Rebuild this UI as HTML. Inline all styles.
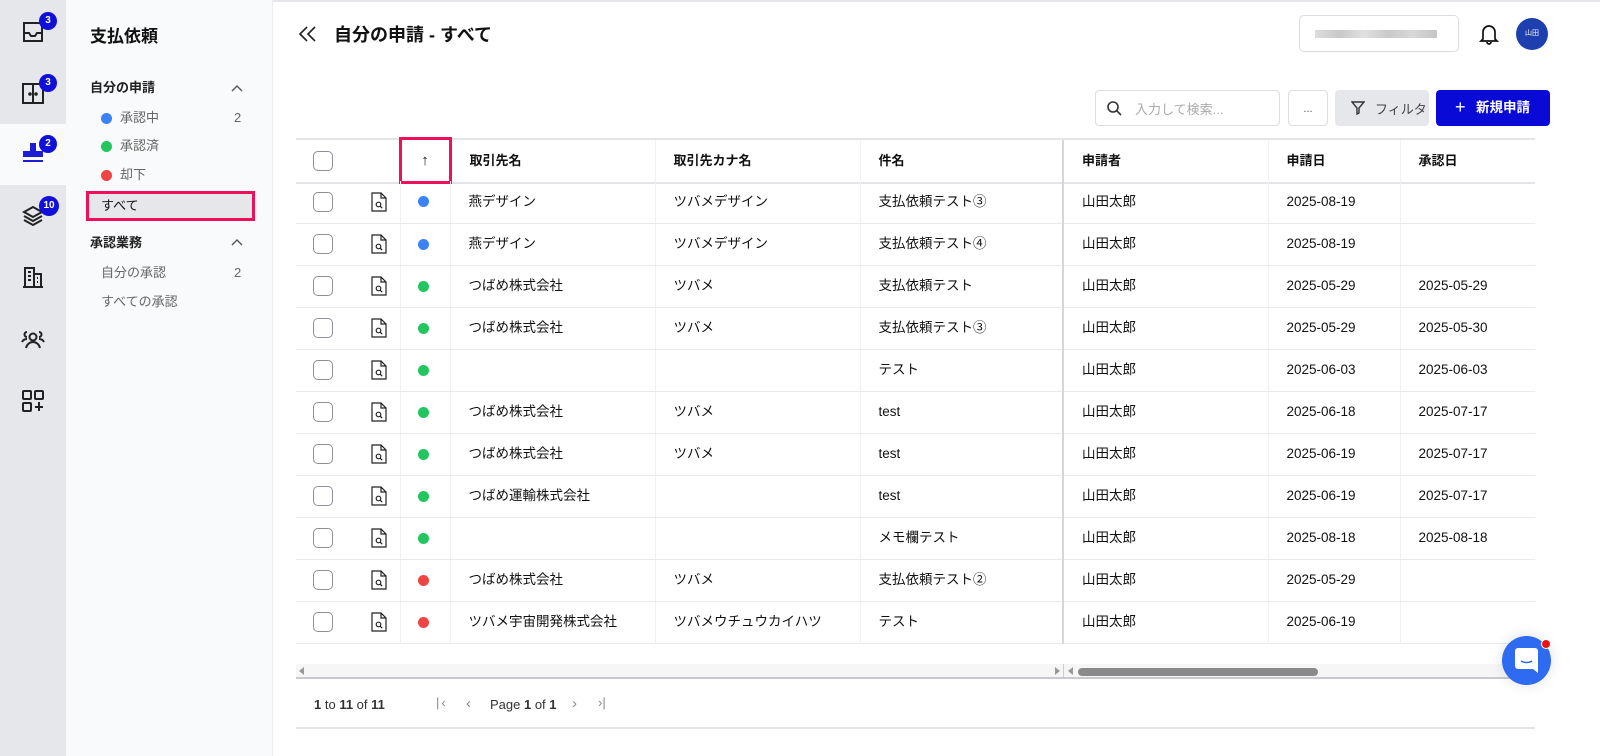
<!DOCTYPE html>
<html><head><meta charset="utf-8">
<style>
*{box-sizing:border-box;margin:0;padding:0}
body{width:1600px;height:756px;overflow:hidden;background:#fff;font-family:"Liberation Sans","Noto Sans CJK JP",sans-serif;color:#111;position:relative}
.abs{position:absolute}
.rail{left:0;top:0;width:66px;height:756px;background:#e5e7eb}
.rail .act{position:absolute;left:0;top:124px;width:66px;height:61px;background:#f9fafb}
.ic{position:absolute;left:20px;width:26px;height:26px}
.badge{position:absolute;background:#1010d8;color:#fff;font-size:10px;font-weight:bold;border-radius:50%;width:18px;height:18px;line-height:18px;text-align:center}
.side{left:66px;top:0;width:207px;height:756px;background:#f9fafb;border-right:1px solid #eceef1}
.side .t{position:absolute;left:24px;top:22px;font-size:17px;font-weight:bold}
.side .sec{position:absolute;left:24px;font-size:13px;font-weight:bold;color:#222;line-height:18px}
.side .it{position:absolute;left:35px;font-size:13px;color:#666;line-height:18px}
.side .cnt{position:absolute;left:168px;font-size:13px;color:#666;line-height:18px}
.dot{display:inline-block;width:11px;height:11px;border-radius:50%;position:absolute}
.chev{position:absolute;left:165px;width:12px;height:8px}
table{border-collapse:collapse;position:absolute;left:296px;top:137px;width:1239px;font-size:13.5px;table-layout:fixed}
td,th{height:42px;line-height:20px;vertical-align:middle;border-bottom:1px solid #e8e9ec;border-left:1px solid #f0f1f3;padding-left:18px;text-align:left;white-space:nowrap;overflow:hidden}
th{height:44px;font-weight:bold;font-size:13px;border-top:2px solid #e3e4e7;border-bottom:2px solid #e3e4e7}
td:first-child,th:first-child,td:nth-child(2),th:nth-child(2){border-left:none}
.pin{border-left:2px solid #d5d7dc!important}
.cb{display:block;width:20px;height:20px;border:1.5px solid #8d9097;border-radius:5px;margin-left:-1px}
.sd{display:block;width:11px;height:11px;border-radius:50%;margin-left:-1px}
.b{background:#3b82f6}.g{background:#22c55e}.r{background:#ef4444}
</style></head><body>
<div class="abs rail">
 <div class="act"></div>
 <svg class="ic" style="top:19px" viewBox="0 0 26 26" fill="none" stroke="#222" stroke-width="2"><path d="M4 4h18v18H4z M4 14h5l2 3h4l2-3h5"/></svg>
 <div class="badge" style="left:39px;top:12px">3</div>
 <svg class="ic" style="top:80px" viewBox="0 0 26 26" fill="none" stroke="#222" stroke-width="2"><path d="M3 4h20v19H3z M13 4v19"/><circle cx="10" cy="14" r=".8" fill="#222"/><circle cx="16" cy="14" r=".8" fill="#222"/></svg>
 <div class="badge" style="left:39px;top:74px">3</div>
 <svg class="ic" style="top:140px" viewBox="0 0 26 26" fill="#1d1dd6"><path d="M10 3h6v8h7v6H3v-6h7z"/><rect x="3" y="20" width="20" height="2"/></svg>
 <div class="badge" style="left:39px;top:135px">2</div>
 <svg class="ic" style="top:203px" viewBox="0 0 26 26" fill="none" stroke="#222" stroke-width="2"><path d="M13 4l9 5-9 5-9-5z M4 13l9 5 9-5 M4 17l9 5 9-5"/></svg>
 <div class="badge" style="left:39px;top:196px;width:20px;height:20px;line-height:20px">10</div>
 <svg class="ic" style="top:264px" viewBox="0 0 26 26" fill="none" stroke="#222" stroke-width="2"><path d="M3 23h20 M5 23V4h9v19 M14 10h7v13 M8 8h3 M8 12h3 M8 16h3 M17 14h1 M17 18h1"/></svg>
 <svg class="ic" style="top:326px" viewBox="0 0 26 26" fill="none" stroke="#222" stroke-width="2"><circle cx="13" cy="11" r="3.5"/><path d="M6 22c1-4 4-6 7-6s6 2 7 6 M7 6a2.5 2.5 0 1 0 0 5 M2 16c1-2 3-3 5-3 M19 6a2.5 2.5 0 1 1 0 5 M24 16c-1-2-3-3-5-3"/></svg>
 <svg class="ic" style="top:388px" viewBox="0 0 26 26" fill="none" stroke="#222" stroke-width="2"><rect x="3" y="3" width="8" height="8" rx="1"/><rect x="15" y="3" width="8" height="8" rx="1"/><rect x="3" y="15" width="8" height="8" rx="1"/><path d="M19 14v9 M15 19h8"/></svg>
</div>
<div class="abs side">
 <div class="t">支払依頼</div>
 <div class="sec" style="top:79px">自分の申請</div>
 <svg class="chev" style="top:84px" viewBox="0 0 12 8" fill="none" stroke="#555" stroke-width="1.4"><path d="M1 7l5-5 5 5"/></svg>
 <span class="dot b" style="left:35px;top:113px"></span><div class="it" style="top:109px;left:54px">承認中</div><div class="cnt" style="top:109px">2</div>
 <span class="dot g" style="left:35px;top:141px"></span><div class="it" style="top:137px;left:54px">承認済</div>
 <span class="dot r" style="left:35px;top:170px"></span><div class="it" style="top:166px;left:54px">却下</div>
 <div style="position:absolute;left:20px;top:191px;width:169px;height:30px;background:#e5e7eb;border:3px solid #f0105a"></div>
 <div class="it" style="top:197px;left:35px;color:#111">すべて</div>
 <div class="sec" style="top:234px">承認業務</div>
 <svg class="chev" style="top:238px" viewBox="0 0 12 8" fill="none" stroke="#555" stroke-width="1.4"><path d="M1 7l5-5 5 5"/></svg>
 <div class="it" style="top:264px">自分の承認</div><div class="cnt" style="top:264px">2</div>
 <div class="it" style="top:293px">すべての承認</div>
</div>
<div class="abs" style="left:273px;top:0;width:1327px;height:2px;background:#e5e7eb"></div>
<svg class="abs" style="left:298px;top:26px" width="20" height="16" viewBox="0 0 20 16" fill="none" stroke="#222" stroke-width="1.6"><path d="M9 1L2 8l7 7 M17 1l-7 7 7 7"/></svg>
<div class="abs" style="left:334px;top:21px;font-size:18px;font-weight:bold">自分の申請 - すべて</div>
<div class="abs" style="left:1299px;top:15px;width:160px;height:37px;border:1px solid #ddd;border-radius:5px"></div>
<div class="abs" style="left:1315px;top:30px;width:122px;height:8px;background:linear-gradient(90deg,#ddd,#c8c8c8,#e0e0e0,#cacaca,#d8d8d8,#c4c4c4)"></div>
<svg class="abs" style="left:1479px;top:23px" width="20" height="22" viewBox="0 0 20 22" fill="none" stroke="#111" stroke-width="1.7"><path d="M4 16V9a6 6 0 0 1 12 0v7l2 2H2z M8 19a2 2 0 0 0 4 0"/></svg>
<div class="abs" style="left:1516px;top:18px;width:32px;height:32px;border-radius:50%;background:#1e40af;color:#fff;font-size:7px;text-align:center;line-height:32px">山田</div>
<div class="abs" style="left:1095px;top:90px;width:185px;height:36px;border:1px solid #ddd;border-radius:4px"></div>
<svg class="abs" style="left:1106px;top:100px" width="16" height="16" viewBox="0 0 16 16" fill="none" stroke="#333" stroke-width="1.6"><circle cx="7" cy="7" r="5"/><path d="M11 11l4 4"/></svg>
<div class="abs" style="left:1135px;top:99px;font-size:13px;color:#aaa">入力して検索...</div>
<div class="abs" style="left:1288px;top:90px;width:40px;height:36px;border:1px solid #ddd;border-radius:4px;text-align:center;font-size:11px;line-height:36px;color:#555">...</div>
<div class="abs" style="left:1335px;top:90px;width:94px;height:36px;background:#e5e7eb;border-radius:4px"></div>
<svg class="abs" style="left:1351px;top:101px" width="14" height="14" viewBox="0 0 14 14" fill="none" stroke="#333" stroke-width="1.4"><path d="M1 1h12L8 7v5l-2 1V7z"/></svg>
<div class="abs" style="left:1375px;top:99px;font-size:13px;color:#444">フィルタ</div>
<div class="abs" style="left:1436px;top:90px;width:114px;height:36px;background:#0a0ad6;border-radius:4px;color:#fff;font-size:13.5px;font-weight:bold;line-height:36px;padding-left:40px">新規申請</div>
<div class="abs" style="left:1455px;top:99px;color:#fff;font-size:18px;line-height:16px">+</div>
<table>
<colgroup><col style="width:54px"><col style="width:50px"><col style="width:50px"><col style="width:205px"><col style="width:205px"><col style="width:203px"><col style="width:205px"><col style="width:132px"><col style="width:135px"></colgroup>
<tr><th><span class="cb"></span></th><th></th><th style="padding:0;text-align:center;border:3px solid #f0105a;font-size:15px">↑</th><th>取引先名</th><th>取引先カナ名</th><th>件名</th><th class="pin">申請者</th><th>申請日</th><th>承認日</th></tr>
</table>
<table id="rows" style="top:181px">
<colgroup><col style="width:54px"><col style="width:50px"><col style="width:50px"><col style="width:205px"><col style="width:205px"><col style="width:203px"><col style="width:205px"><col style="width:132px"><col style="width:135px"></colgroup>
</table>
<script>
var D=[["b","燕デザイン","ツバメデザイン","支払依頼テスト③","2025-08-19",""],
["b","燕デザイン","ツバメデザイン","支払依頼テスト④","2025-08-19",""],
["g","つばめ株式会社","ツバメ","支払依頼テスト","2025-05-29","2025-05-29"],
["g","つばめ株式会社","ツバメ","支払依頼テスト③","2025-05-29","2025-05-30"],
["g","","","テスト","2025-06-03","2025-06-03"],
["g","つばめ株式会社","ツバメ","test","2025-06-18","2025-07-17"],
["g","つばめ株式会社","ツバメ","test","2025-06-19","2025-07-17"],
["g","つばめ運輸株式会社","","test","2025-06-19","2025-07-17"],
["g","","","メモ欄テスト","2025-08-18","2025-08-18"],
["r","つばめ株式会社","ツバメ","支払依頼テスト②","2025-05-29",""],
["r","ツバメ宇宙開発株式会社","ツバメウチュウカイハツ","テスト","2025-06-19",""]];
var doc='<svg width="16" height="20" viewBox="0 0 16 20" fill="none" stroke="#222" stroke-width="1.2" style="display:block;margin-left:3px"><path d="M1 1h9l5 5v13H1z M10 1v5h5"/><circle cx="7.5" cy="12.5" r="2.3"/><path d="M9.2 14.2l2 2"/></svg>';
var h='';D.forEach(function(r){h+='<tr><td><span class="cb"></span></td><td>'+doc+'</td><td><span class="sd '+r[0]+'"></span></td><td>'+r[1]+'</td><td>'+r[2]+'</td><td>'+r[3]+'</td><td class="pin">山田太郎</td><td>'+r[4]+'</td><td>'+r[5]+'</td></tr>'});
document.getElementById('rows').innerHTML+=h;
</script>
<div class="abs" style="left:296px;top:664px;width:1239px;height:15px;background:#f6f6f6;border-bottom:2px solid #c8cad0"></div>
<div class="abs" style="left:1063px;top:664px;width:1px;height:15px;background:#ccc"></div>
<div class="abs" style="left:1078px;top:668px;width:240px;height:8px;border-radius:4px;background:#8a8a8a"></div>
<div class="abs" style="left:299px;top:667px;width:0;height:0;border:4px solid transparent;border-right:5px solid #999;border-left:none"></div>
<div class="abs" style="left:1055px;top:667px;width:0;height:0;border:4px solid transparent;border-left:5px solid #999;border-right:none"></div>
<div class="abs" style="left:1068px;top:667px;width:0;height:0;border:4px solid transparent;border-right:5px solid #999;border-left:none"></div>
<div class="abs" style="left:314px;top:697px;font-size:13px;color:#333"><b>1</b> to <b>11</b> of <b>11</b></div>
<div class="abs" style="left:436px;top:695px;font-size:13px;color:#888;letter-spacing:2px">|‹</div>
<div class="abs" style="left:466px;top:695px;font-size:15px;color:#888">‹</div>
<div class="abs" style="left:490px;top:697px;font-size:13px;color:#333">Page <b>1</b> of <b>1</b></div>
<div class="abs" style="left:572px;top:695px;font-size:15px;color:#888">›</div>
<div class="abs" style="left:598px;top:695px;font-size:13px;color:#888">›|</div>
<div class="abs" style="left:296px;top:727px;width:1239px;height:2px;background:#e3e4e7"></div>
<div class="abs" style="left:1502px;top:636px;width:49px;height:49px;border-radius:50%;background:#2f6bf0;box-shadow:0 0 14px rgba(0,0,0,.12)"></div>
<svg class="abs" style="left:1515px;top:648px" width="23" height="25" viewBox="0 0 23 25"><path d="M3 0h17a3 3 0 0 1 3 3v22l-5-4H3a3 3 0 0 1-3-3V3a3 3 0 0 1 3-3z" fill="#fff"/><path d="M6 13c3 2 8 2 11 0" stroke="#2f6bf0" stroke-width="1.6" fill="none"/></svg>
<div class="abs" style="left:1541px;top:639px;width:10px;height:10px;border-radius:50%;background:#e11;border:1.5px solid #fff"></div>
</body></html>
